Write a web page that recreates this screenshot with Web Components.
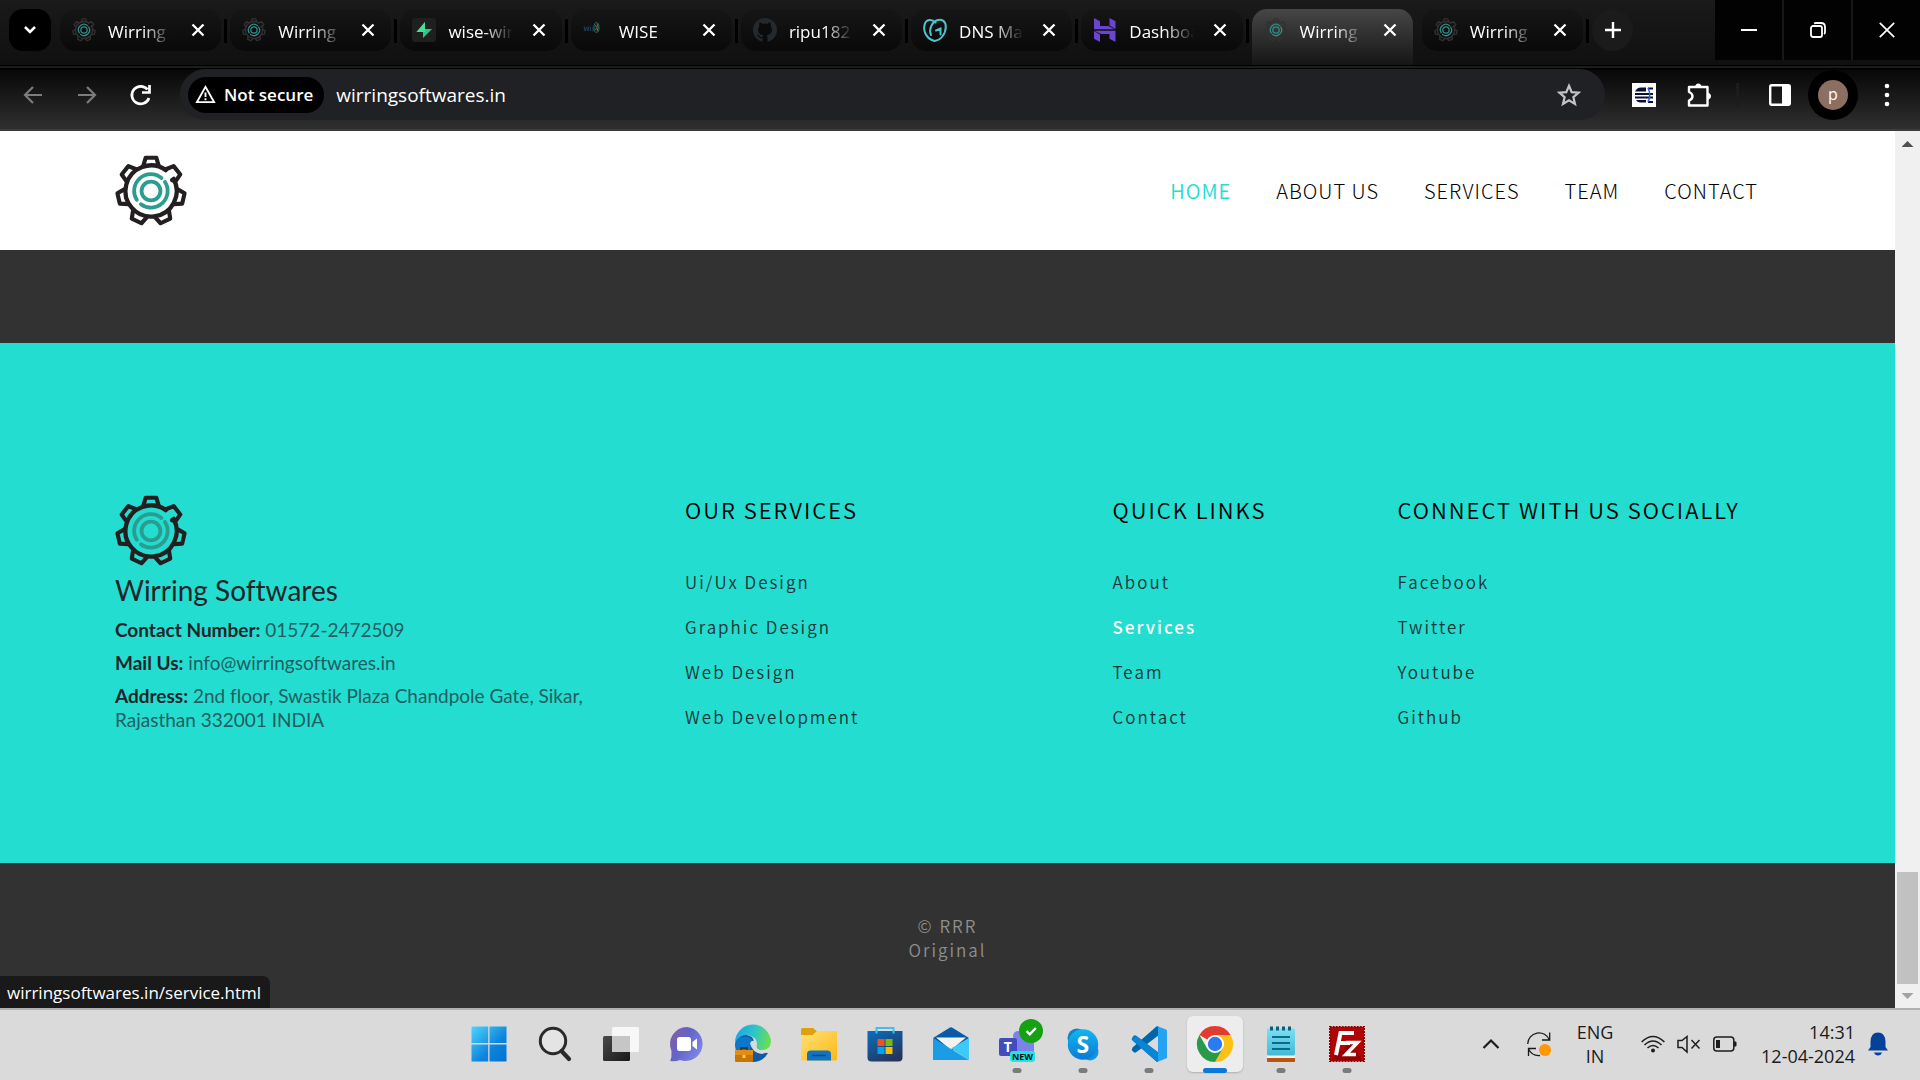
<!DOCTYPE html>
<html lang="en">
<head>
<meta charset="utf-8">
<title>Wirring Softwares</title>
<style>
html,body{height:100%}
body{margin:0;display:flex;flex-direction:column;overflow:hidden;background:#323232;
--ui:"Open Sans","Noto Sans",sans-serif;--site:"Noto Sans CJK SC","Noto Sans",sans-serif;--brand:Lato,"Open Sans",sans-serif;font-family:var(--ui)}
main{flex:1;min-height:0;display:flex;position:relative}
site-page{flex:1;min-width:0}
status-bubble{position:absolute;left:0;bottom:0}
</style>
</head>
<body>
<tab-strip>
<browser-tab icon="gear">Wirring S</browser-tab>
<browser-tab icon="gear">Wirring S</browser-tab>
<browser-tab icon="bolt">wise-wirr</browser-tab>
<browser-tab icon="wise">WISE</browser-tab>
<browser-tab icon="github">ripu1821</browser-tab>
<browser-tab icon="godaddy">DNS Man</browser-tab>
<browser-tab icon="hostinger">Dashboa</browser-tab>
<browser-tab icon="gear" active>Wirring</browser-tab>
<browser-tab icon="gear">Wirring</browser-tab>
</tab-strip>
<browser-toolbar></browser-toolbar>
<main>
<site-page></site-page>
<scroll-bar></scroll-bar>
<status-bubble>wirringsoftwares.in/service.html</status-bubble>
</main>
<task-bar></task-bar>
<script>
const gear = (dark, teal) => `<svg viewBox="-35 -35 70 70" fill="none" stroke-linecap="round" stroke-linejoin="round">
<g stroke="${dark}" stroke-width="4">${[0,1,3,4,5,6,2].map(i => i === 1
  ? `<path transform="rotate(51.4)" d="M-7.500-24.500L-5.200-32.300H5.200L7.400-25L4.500-22.500"/>`
  : `<path transform="rotate(${i*51.43})" d="M-7.500-24.500L-5.200-32.300H5.200L7.500-24.500"/>`).join('')}
<path d="M22-11.800A24.900 24.900 0 1 1 14.500-20.300" stroke-width="4.200"/></g>
<g stroke="${teal}" stroke-width="3.700"><circle r="9.200"/><path d="M-13.800 8.600A16.200 16.200 0 0 1 10.200-12.600M13.600-8.800A16.200 16.200 0 0 1-9.800 12.900"/></g></svg>`;
const line = (d, w = 2, c = 'currentColor', vb = '0 0 24 24') => `<svg viewBox="${vb}" fill="none" stroke="${c}" stroke-width="${w}"><path d="${d}"/></svg>`;
const ICONS = {
gear: gear('#343031', '#2f8f89'),
logo: gear('#231f20', '#2a9d90'),
bolt: `<svg viewBox="0 0 24 24"><rect width="24" height="24" rx="3" fill="#1f1f1f"/><path d="M13 4v7h7L11 20v-6H4.500Z" fill="#2fc584"/><path d="M13 4L4.500 14H13Z" fill="#46dd9c"/></svg>`,
wise: `<svg viewBox="0 0 24 24" fill="none" stroke-width="1"><path d="M1 8l1 5 1.500-4 1.500 4 1-5M7.500 9v4M11 9q-3 1-1 2t-1 2" stroke="#1d4152"/><ellipse cx="13.500" cy="9.500" rx="2.500" ry="5" stroke="#286a68"/><path d="M12.500 7q2 3 0 5M14 5.500q2 4 0 8" stroke="#8a6a34"/></svg>`,
github: `<svg viewBox="0 0 24 24"><circle cx="12" cy="12" r="12" fill="#24292e"/><path d="M9.500 24v-4q-3 .8-4.200-1.500-.7-1.400-1.600-1.800 1.500-.5 2.700 1.200 1.100 1.500 3.200.8.2-1 .8-1.500C6.500 16.600 5 14.500 5 11.500q0-2.100 1.300-3.600-.5-1.500.2-3.300 1.600 0 3.200 1.300 2.300-.6 4.600 0 1.600-1.300 3.200-1.300.7 1.800.2 3.300Q19 9.400 19 11.500c0 3-1.500 5.100-5.400 5.700q.9.800.9 2.500V24z" fill="#0b0b0b"/></svg>`,
godaddy: `<svg viewBox="0 0 24 24" fill="none" stroke="#4cc3cb" stroke-width="2" stroke-linecap="round"><path d="M11.500 23C4 21 0 14 1.500 7 3 .5 9 1 12.500 4.500M8 17C5.500 11 9 4 14 2.200 19 .5 23 3.500 22.800 9 22.600 16 18 22 11.500 23M13 12.500L17.500 10.500V16.500"/></svg>`,
hostinger: `<svg viewBox="0 0 24 24" fill="#6a45d2"><path d="M1 0l6 3.300V8h8.500l6 3.300H1zM16.500 0L22.500 3.300V11L16.500 7.500zM22.500 24l-6-3.300V16H8L1.500 12.700h21zM1 13l6 3.500V24L1 20.700z"/></svg>`,
close: line('M1.500 1.500L12.500 12.500M12.500 1.500L1.500 12.500', 2.3, 'currentColor', '0 0 14 14'),
chev: line('M2 3l5 5 5-5', 2.6, 'currentColor', '0 0 14 12'),
plus: line('M8 0V16M0 8H16', 2.4, 'currentColor', '0 0 16 16'),
min: line('M0 8H16', 2, 'currentColor', '0 0 16 16'),
restore: `<svg viewBox="0 0 16 16" fill="none" stroke="currentColor" stroke-width="1.800"><rect x="1" y="4" width="11" height="11" rx="2"/><path d="M4 1.500Q5 1 6 1H11Q15 1 15 5V10Q15 11.500 14 12"/></svg>`,
wclose: line('M.8.8L15.200 15.200M15.200.8L.8 15.200', 1.7, 'currentColor', '0 0 16 16'),
back: line('M21 12H4M12 4L4 12L12 20', 2.2),
fwd: line('M3 12H20M12 4L20 12L12 20', 2.2),
reload: `<svg viewBox="0 0 24 24" fill="none" stroke="currentColor" stroke-width="2.700"><path d="M20 15A8.800 8.800 0 1 1 18.500 6.500M20.500 2V9.500H13"/></svg>`,
warn: `<svg viewBox="0 0 22 20" fill="none" stroke="#fff" stroke-width="2"><path d="M11 2L20 18H2ZM11 8V12.500M11 14V16"/></svg>`,
star: `<svg viewBox="0 0 24 24" fill="none" stroke="#c4c4c6" stroke-width="2.200"><path d="M12 2.800l2.700 6.300 6.900.6-5.200 4.500 1.600 6.700-6-3.600-6 3.600 1.600-6.700-5.200-4.500 6.900-.6z"/></svg>`,
ext: `<svg viewBox="0 0 24 24"><rect width="24" height="24" fill="#fff"/><path d="M3 8.500Q5 4.500 9 4.500H14V8.500zM16 4.500H21V6.500H16zM3 10H21V12H3zM3 13.500H21V15.500H3zM4 17H14V19.500H8Q5 19 4 17zM16 18H21V20H16z" fill="#0a1030"/><path d="M16 5Q19.500 12 16 19" stroke="#2b63f0" stroke-width="1.500" fill="none"/></svg>`,
puzzle: `<svg viewBox="0 0 24 24"><path d="M2 4H20.500V22.500H2V17.500Q5.500 16 5.500 13.200T2 9Z" fill="none" stroke="#fff" stroke-width="2.400" stroke-linejoin="round"/><path d="M8 4Q8.500 .5 11.300 .5T14.600 4zM20.500 9.500q3.500 1 3.500 3.700t-3.500 3.700z" fill="#fff"/></svg>`,
panel: `<svg viewBox="0 0 22 22"><rect x="1.200" y="1.200" width="19.600" height="19.600" rx="1.500" fill="none" stroke="#fff" stroke-width="2.400"/><path d="M13 1h8v20h-8z" fill="#fff"/></svg>`,
dots: `<svg viewBox="0 0 6 24" fill="#fff"><circle cx="3" cy="3" r="2.300"/><circle cx="3" cy="12" r="2.300"/><circle cx="3" cy="21" r="2.300"/></svg>`,
windows: `<svg viewBox="0 0 36 36"><defs><linearGradient id="w" gradientUnits="userSpaceOnUse" x1="0" y1="0" x2="36" y2="36"><stop stop-color="#50d6ff"/><stop offset=".6" stop-color="#0e84dc"/><stop offset="1" stop-color="#0073cf"/></linearGradient></defs><path fill="url(#w)" d="M1.500.5H17.200V17H.5V1.500ZM18.500.5H35.500V17H18.500ZM.5 18.500H17.200V35.500H.5ZM18.500 18.500H35.500V35.500H18.500Z"/></svg>`,
search: `<svg viewBox="0 0 36 36" fill="none" stroke="#2a2a2a"><circle cx="16" cy="15" r="12.700" stroke-width="3" fill="#e4e4e4"/><path d="M24.500 25L32 33" stroke-width="4.200" stroke-linecap="round"/></svg>`,
taskview: `<svg viewBox="0 0 36 36"><defs><linearGradient id="t" x1="0" y1="0" x2="1" y2="1"><stop stop-color="#4a4a4a"/><stop offset="1" stop-color="#181818"/></linearGradient></defs><rect y="10" width="27" height="25" rx="1.500" fill="url(#t)"/><rect x="9" y="1" width="27" height="25" rx="1.500" fill="#f7f7f7"/><path d="M9 10H27V26H9z" fill="#c6c6c6"/></svg>`,
chat: `<svg viewBox="0 0 36 36"><defs><linearGradient id="c" x1="0" y1="0" x2="1" y2=".6"><stop stop-color="#8c5c9e"/><stop offset=".5" stop-color="#6264c8"/><stop offset="1" stop-color="#7c86e4"/></linearGradient></defs><path fill="url(#c)" d="M18 1A17 17 0 1 1 11 34Q7 36 1.200 35Q3 31 2.500 25A17 17 0 0 1 18 1Z"/><rect x="8" y="11" width="14" height="14" rx="2.500" fill="#fff"/><path d="M23.500 16L28 12.500V23.500L23.500 20Z" fill="#fff"/></svg>`,
edge: `<svg viewBox="0 0 36 36"><defs><linearGradient id="e" x1="0" y1=".3" x2="1" y2=".5"><stop stop-color="#1da4e4"/><stop offset=".5" stop-color="#2cc4cc"/><stop offset="1" stop-color="#6ae04e"/></linearGradient></defs><path d="M0 18Q2 7 12 9Q21 11 18 19Q17 26 33 27Q28 36 18 36Q2 35 0 18Z" fill="#1059a6"/><path d="M0 18Q4 9 13 11Q20 13 17 18L14 26H1Z" fill="#0c78cc"/><path d="M0 17A18 18 0 0 1 36 16Q35 25 25 24Q20 23 21.500 20Q23 14 18 11Q7 5 0 17Z" fill="url(#e)"/><path d="M15 17Q18 12 22 18Q19 25 33 26L27 28Q17 27 15 17Z" fill="#dadada"/><rect y="24" width="18" height="12" rx="1" fill="#c97408"/><path d="M0 24H18V29H0z" fill="#e38d13"/><path d="M6 24v-2h6v2" stroke="#3a2c1c" stroke-width="1.500" fill="none"/><rect x="7.500" y="29" width="3" height="3" fill="#ffcf33"/></svg>`,
folder: `<svg viewBox="0 0 36 36"><defs><linearGradient id="f" x1="0" y1="0" x2="1" y2="1"><stop stop-color="#ffe27a"/><stop offset="1" stop-color="#fcb813"/></linearGradient></defs><path d="M0 3.500Q0 2 1.500 2H12L16 5.500V12H0z" fill="#dfa00c"/><path d="M0 9H11.500L16 5H35Q36 5 36 6V33Q36 34.500 34.500 34.500H1.500Q0 34.500 0 33z" fill="url(#f)"/><path d="M6 34.500V28Q6 24.500 9.500 24.500H26.500Q30 24.500 30 28V34.500z" fill="#1173c4"/><path d="M11 29.500H25" stroke="#0a4b8c" stroke-width="1.500"/></svg>`,
store: `<svg viewBox="0 0 36 36"><defs><linearGradient id="s" x1="0" y1="0" x2=".6" y2="1"><stop stop-color="#0a6fc0"/><stop offset="1" stop-color="#24365e"/></linearGradient></defs><path d="M.5 5H35.500V31.500Q35.500 35.500 31.500 35.500H4.500Q.5 35.500 .5 31.500z" fill="url(#s)"/><path d="M9.500 7.500V2H26.500V7.500" fill="none" stroke="#36c3f2" stroke-width="2"/><path d="M10.500 13H17.500V20H10.500z" fill="#f25022"/><path d="M18.500 13H25.500V20H18.500z" fill="#7fba00"/><path d="M10.500 21H17.500V28H10.500z" fill="#00a4ef"/><path d="M18.500 21H25.500V28H18.500z" fill="#ffb900"/></svg>`,
mail: `<svg viewBox="0 0 36 36"><path d="M0 12L17 1.500Q18 .8 19 1.500L36 12 18 26Z" fill="#0b5aa8"/><path d="M3 11.500H33L18 24Z" fill="#f3f3f3"/><path d="M0 12L36 34H0z" fill="#1b9ce4"/><path d="M36 12L18 22.500 36 34z" fill="#3ccaf6"/></svg>`,
skype: `<svg viewBox="0 0 36 36"><defs><linearGradient id="k" x1="0" y1="0" x2="0" y2="1"><stop stop-color="#12b6f0"/><stop offset="1" stop-color="#0a7ad6"/></linearGradient></defs><circle cx="12" cy="12" r="9.500" fill="#0d86c4"/><circle cx="25" cy="26" r="8.500" fill="#1295e0"/><circle cx="18" cy="18.500" r="15.200" fill="url(#k)"/></svg>`,
vscode: `<svg viewBox="0 0 36 36"><path d="M2 10.500Q3.500 8.500 5.500 10L28 27V35L26 36 1.500 14.500Q0 12.500 2 10.500Z" fill="#0179cb"/><path d="M2 25.500Q3.500 27.500 5.500 26L28 9V1L26 0 1.500 21.500Q0 23.500 2 25.500Z" fill="#0065a9"/><path d="M1.500 14.500L5.500 10 28 27 26 36z" fill="#0a84d4"/><path d="M26 0L35 3.500Q36 4 36 5V31Q36 32 35 32.500L26 36Q27 35.500 27 34V2Q27 .500 26 0Z" fill="#24a3f2"/></svg>`,
chrome: `<svg viewBox="0 0 36 36"><path d="M18 18L2.400 9A18 18 0 0 1 33.600 9Z" fill="#e33b2e"/><path d="M18 9H33.600A18 18 0 0 1 18 36L25.800 22.500Z" fill="#fdc116"/><path d="M2.400 9A18 18 0 0 0 18 36L25.800 22.500 10.200 22.500Z" fill="#2a9a4a"/><circle cx="18" cy="18" r="9" fill="#fff"/><circle cx="18" cy="18" r="7.200" fill="#2b7af0"/></svg>`,
notepad: `<svg viewBox="0 0 36 36"><defs><linearGradient id="n" x1="0" y1="0" x2="0" y2="1"><stop stop-color="#7be0f4"/><stop offset="1" stop-color="#44b8d6"/></linearGradient></defs><rect x="4" y="30" width="28" height="6" rx="1" fill="#b8560f"/><path d="M4 27H32V32H4z" fill="#f2f2f2"/><rect x="4" y="2.500" width="28" height="27" rx="1.500" fill="url(#n)"/><path d="M9 11H27M9 17H27M9 23H27" stroke="#0b6a86" stroke-width="2"/><path d="M8.500.5V4.500M14.500.5V4.500M20.500.5V4.500M26.500.5V4.500" stroke="#0b5f78" stroke-width="3"/></svg>`,
filezilla: `<svg viewBox="0 0 36 36"><rect x="1" y="1" width="34" height="34" fill="#b00505"/><path d="M20 18L34 34H2z" fill="#930202"/><rect x=".7" y=".7" width="34.600" height="34.600" fill="none" stroke="#8d0000" stroke-width="1.400" stroke-dasharray="2 1"/><path d="M7 29L11.500 7H25M9.500 17H21" fill="none" stroke="#fff" stroke-width="4"/><path d="M17 16.500H28.500L17 28.500H27" fill="none" stroke="#fff" stroke-width="3.600"/></svg>`,
teams: `<svg viewBox="0 0 44 44"><circle cx="19" cy="14" r="5" fill="#7b83eb"/><rect x="15" y="16" width="20" height="17" rx="3" fill="#7b83eb"/><rect y="16" width="18" height="18" rx="2" fill="#444bbd"/></svg>`,
check: `<svg viewBox="0 0 24 24"><circle cx="12" cy="12" r="12" fill="#16a014"/><path d="M7.500 12L10.800 15.300 16.800 9" stroke="#fff" stroke-width="2.400" fill="none"/></svg>`,
up: line('M4.500 16L12 8.500 19.500 16', 2.2, '#1d1d1d'),
sync: `<svg viewBox="0 0 24 24" fill="none" stroke="#1a1a1a" stroke-width="1.300"><path d="M.7 12A11.300 11.300 0 0 1 22.500 8M22.700 .5V8H15M13 23.500A11.500 11.500 0 0 1 1.500 17M1.500 24V16.500H9"/><circle cx="18" cy="18" r="6" fill="#ff9800" stroke="none"/></svg>`,
wifi: `<svg viewBox="0 0 24 24" fill="none" stroke="#1d1d1d" stroke-width="1.600"><path d="M.6 10Q12-1 23.400 10M3.500 13Q12 5 20.500 13M6.500 16Q12 11 17.500 16"/><circle cx="12" cy="18.500" r="2" fill="#1d1d1d" stroke="none"/></svg>`,
volume: `<svg viewBox="0 0 24 24" fill="none" stroke="#1d1d1d" stroke-width="1.500"><path d="M1 8.500H5L10 4.500V20L5 15.500H1ZM14.500 8L22.500 16.500M22.500 8L14.500 16.500"/></svg>`,
battery: `<svg viewBox="0 0 24 24"><rect x=".8" y="5" width="20" height="14" rx="3" fill="none" stroke="#1d1d1d" stroke-width="1.500"/><rect x="3" y="8" width="4" height="8" fill="#1d1d1d"/><path d="M21 9.500h1.500q1 0 1 1v3q0 1-1 1H21z" fill="#1d1d1d"/></svg>`,
bell: `<svg viewBox="0 0 24 24" fill="#04429a"><path d="M4.500 9.500Q5 .5 12 .5t7.500 9V15L22 18.500H2L4.500 15zM8 20.500H16Q15 23.500 12 23.500T8 20.500Z"/></svg>`
};
const define = (name, css, html) => customElements.define(name, class extends HTMLElement {
  connectedCallback() {
    if (this.shadowRoot) return;
    this.attachShadow({mode: 'open'}).innerHTML = `<style>:host,*{box-sizing:border-box}button{appearance:none;border:0;padding:0;background:none;font:inherit;color:inherit;display:flex;align-items:center;justify-content:center}a{color:inherit;text-decoration:none}${css}</style>` + (typeof html === 'function' ? html(this) : html);
  }
});

define('ui-icon', ':host{display:block;width:24px;height:24px;flex:none}svg{display:block;width:100%;height:100%;overflow:visible}', el => ICONS[el.getAttribute('name')]);

define('browser-tab', `
:host{display:flex;align-items:center;min-width:0;height:42px;margin-top:9px;padding:0 16px 0 12px;border-radius:15px;background:linear-gradient(#161616,#090909);color:#fff;font-size:17px;position:relative}
:host::after{content:"";position:absolute;right:-6px;top:10px;width:3px;height:24px;background:#000}
:host([active]){height:56px;padding-bottom:14px;border-radius:15px 15px 0 0;background:linear-gradient(#464646,#161616)}
:host([active])::after{display:none}
.t{flex:1;min-width:0;margin:3px 16px 0 12px;overflow:hidden;white-space:nowrap;line-height:24px;-webkit-mask:linear-gradient(90deg,#000 52%,transparent 96%);mask:linear-gradient(90deg,#000 52%,transparent 96%)}
button{flex:none}
.x{width:14px;height:14px}`,
el => `<ui-icon name="${el.getAttribute('icon')}"></ui-icon><span class="t"><slot></slot></span><button aria-label="Close tab"><ui-icon class="x" name="close"></ui-icon></button>`);

define('tab-strip', `
:host{display:flex;height:65px;background:linear-gradient(#1a1a1a,#101010);color:#fff;padding-left:9px}
.menu{width:42px;height:42px;margin:9px 9px 0 0;border-radius:14px;background:#000}
.menu ui-icon{width:14px;height:12px}
.tabs{flex:1;display:grid;grid-auto-flow:column;grid-auto-columns:minmax(0,1fr);gap:9px}
.new{width:41px;height:42px;margin:9px 82px 0 9px;border-radius:50%;background:#1b1b1b}
.new ui-icon,.win ui-icon{width:16px;height:16px}
.win{display:flex;gap:2px;height:60px;background:#181818}
.win button{width:67px;background:#020202}`,
`<button class="menu" aria-label="Search tabs"><ui-icon name="chev"></ui-icon></button><div class="tabs"><slot></slot></div><button class="new" aria-label="New tab"><ui-icon name="plus"></ui-icon></button>
<div class="win"><button aria-label="Minimize"><ui-icon name="min"></ui-icon></button><button aria-label="Restore"><ui-icon name="restore"></ui-icon></button><button aria-label="Close"><ui-icon name="wclose"></ui-icon></button></div>`);

define('browser-toolbar', `
:host{display:flex;align-items:center;height:66px;padding:3px 30px 9px 21px;color:#fff;border-top:1px solid #000;border-bottom:2px solid #3b3b3b;background:linear-gradient(#1c1c1c 2px,#000 2px,#000 3px,#080808 4px,#2f2f2f)}
.nav{display:flex;gap:30px;margin-right:27px}
.dim{color:#7c7c7c}
.omni{flex:1;display:flex;align-items:center;height:51px;margin-right:27px;padding:0 24px 0 8px;border-radius:26px;background:#202125}
.chip{height:36px;padding:0 11px 0 7px;gap:8px;border-radius:18px;background:#000;font-weight:600;font-size:17px}
.chip ui-icon{width:21px;height:19px}
input{flex:1;min-width:0;border:0;background:none;color:#fff;font:19px/28px var(--ui);padding:0;margin-left:12px;outline:0}
.right{display:flex;align-items:center}
.right button:nth-of-type(2){margin-left:31px}
i{width:3px;height:24px;margin:0 30px 0 25px;background:#1c1c1c}
.panel{width:22px;height:22px}
.me{width:50px;height:50px;margin:0 26px 0 17px;border-radius:50%;background:#000}
.me span{width:30px;height:30px;border-radius:50%;background:#8d6e63;font-size:16px;line-height:28px}
.dots{width:6px}`,
`<div class="nav"><button class="dim" aria-label="Back"><ui-icon name="back"></ui-icon></button><button class="dim" aria-label="Forward"><ui-icon name="fwd"></ui-icon></button><button aria-label="Reload"><ui-icon name="reload"></ui-icon></button></div>
<div class="omni"><button class="chip"><ui-icon name="warn"></ui-icon>Not secure</button><input aria-label="Address" value="wirringsoftwares.in"><button aria-label="Bookmark"><ui-icon name="star"></ui-icon></button></div>
<div class="right"><button aria-label="Extension"><ui-icon name="ext"></ui-icon></button><button aria-label="Extensions"><ui-icon name="puzzle"></ui-icon></button><i></i><button aria-label="Side panel"><ui-icon class="panel" name="panel"></ui-icon></button><button class="me"><span>p</span></button><button aria-label="Menu"><ui-icon class="dots" name="dots"></ui-icon></button></div>`);

define('site-header', `
:host{display:flex;align-items:center;justify-content:space-between;padding:24px 137px 23px 115px;background:#fff;color:#000;font:300 20px/24px var(--site);letter-spacing:1px}
a{display:block}
.logo{width:72px;height:72px}
nav{display:flex;gap:45px}
.on{color:#23ddd1;font-weight:350}`,
`<a href="#" aria-label="Home"><ui-icon class="logo" name="logo"></ui-icon></a><nav><a class="on" href="#">HOME</a><a href="#">ABOUT US</a><a href="#">SERVICES</a><a href="#">TEAM</a><a href="#">CONTACT</a></nav>`);

define('footer-links', `
:host{display:block;font:350 17px/21px var(--site);letter-spacing:2px;color:#1f3436}
h2{margin:0 0 48px;font-size:22px;line-height:28px;font-weight:350;color:#000;white-space:nowrap}
ul{list-style:none;margin:0;padding:0;display:grid;gap:24px}
.on{color:#fff;font-weight:500}`,
el => `<h2>${el.getAttribute('heading')}</h2><ul>${el.getAttribute('links').split(',').map(l => `<li><a href="#"${l === el.getAttribute('current') ? ' class="on"' : ''}>${l}</a></li>`).join('')}</ul>`);

define('contact-card', `
:host{display:block;padding-right:90px;font:19px/24px var(--brand);font-variant-ligatures:none;color:#215e60}
.logo{width:72px;height:72px}
h1{margin:6px 0 11px;font-size:28px;line-height:34px;font-weight:400;color:#212529}
p{margin:0 0 9px}
b{font-weight:700;color:#212529}`,
`<ui-icon class="logo" name="logo"></ui-icon><h1>Wirring Softwares</h1><p><b>Contact Number:</b> 01572-2472509</p><p><b>Mail Us:</b> info@wirringsoftwares.in</p><p><b>Address:</b> 2nd floor, Swastik Plaza Chandpole Gate, Sikar,<br>Rajasthan 332001 INDIA</p>`);

define('site-page', `
:host{display:flex;flex-direction:column;background:#323232}
footer{margin-top:93px;padding:152px 70px 122px 115px;background:#23ddd1;display:grid;grid-template-columns:4fr 3fr 2fr 3fr}
.copy{margin:51px 0;text-align:center;font:350 17px/24px var(--site);letter-spacing:2px;color:#8e8e8e}
.copy span{display:block}`,
`<site-header></site-header><footer><contact-card></contact-card>
<footer-links heading="OUR SERVICES" links="Ui/Ux Design,Graphic Design,Web Design,Web Development"></footer-links>
<footer-links heading="QUICK LINKS" links="About,Services,Team,Contact" current="Services"></footer-links>
<footer-links heading="CONNECT WITH US SOCIALLY" links="Facebook,Twitter,Youtube,Github"></footer-links></footer>
<div class="copy"><span>© RRR</span><span>Original</span></div>`);

define('scroll-bar', `
:host{display:flex;flex-direction:column;align-items:center;width:25px;background:#f0f0f0}
b{width:12px;height:6px;margin:10px 0;background:#505050;clip-path:polygon(50% 0,100% 100%,0 100%)}
.track{flex:1;width:21px;display:flex;align-items:flex-end}
.thumb{width:100%;height:13.5%;background:#c1c1c1}
.dn{background:#a3a3a3;clip-path:polygon(0 0,100% 0,50% 100%);margin:9px 0}`,
`<b></b><div class="track"><div class="thumb"></div></div><b class="dn"></b>`);

define('status-bubble', ':host{display:block;padding:4px 9px 2px 7px;background:#191919;border-radius:0 7px 0 0;color:#fff;font:17px/26px var(--ui)}', '<slot></slot>');

define('task-item', `
:host{display:block}
button{position:relative;width:56px;height:56px;border-radius:6px}
:host([state=active]) button{background:#ededed;box-shadow:0 1px 2px #0003}
:host([state]) button::after{content:"";position:absolute;bottom:-1px;left:50%;transform:translateX(-50%);width:9px;height:5px;border-radius:3px;background:#7b7b7b}
:host([state=active]) button::after{width:24px;background:#0a78d6}
ui-icon{width:36px;height:36px}
.big{width:44px;height:44px;margin-left:8px}
.ck{position:absolute;width:24px;height:24px;left:30px;top:3px}
.t{position:absolute;left:10px;top:20px;width:18px;text-align:center;color:#fff;font:700 14px/22px var(--ui)}
.new{position:absolute;left:21px;top:35px;height:11px;border-radius:3px;background:#22e2e2;color:#001414;font:700 9px/11px var(--ui);padding:0 2px}
.s{position:absolute;inset:0;text-align:center;color:#fff;font:700 23px/56px var(--ui)}`,
el => { const n = el.getAttribute('name');
  return `<button aria-label="${n}"><ui-icon name="${n}"${n === 'teams' ? ' class="big"' : ''}></ui-icon>${n === 'teams' ? '<span class="t">T</span><span class="new">NEW</span><ui-icon class="ck" name="check"></ui-icon>' : n === 'skype' ? '<span class="s">S</span>' : ''}</button>`; });

define('task-bar', `
:host{display:flex;align-items:center;height:72px;padding-bottom:2px;background:#dadada;border-top:2px solid #b1b1b1;color:#1b1b1b;font:18px/24px var(--ui)}
.pad{flex:460 0 0}
.apps{display:flex;gap:10px}
.tray{flex:544 0 0;display:flex;align-items:center;justify-content:flex-end}
.up{margin-right:24px}
.lang{width:62px;margin:0 15px 0 13px;text-align:center}
.sys{gap:12px}
.time{margin-left:24px;text-align:right;display:block}
.bell{margin:0 30px 0 11px}
span{display:block}`,
`<div class="pad"></div><div class="apps">${['windows','search','taskview','chat','edge','folder','store','mail','teams*','skype*','vscode*','chrome+','notepad*','filezilla*'].map(n => `<task-item name="${n.replace(/[*+]/,'')}"${n.endsWith('*') ? ' state="open"' : n.endsWith('+') ? ' state="active"' : ''}></task-item>`).join('')}</div>
<div class="tray"><button class="up" aria-label="Show hidden icons"><ui-icon name="up"></ui-icon></button><button aria-label="Update"><ui-icon name="sync"></ui-icon></button><button class="lang"><div><span>ENG</span><span>IN</span></div></button><button class="sys" aria-label="System"><ui-icon name="wifi"></ui-icon><ui-icon name="volume"></ui-icon><ui-icon name="battery"></ui-icon></button><button class="time"><span>14:31</span><span>12-04-2024</span></button><button class="bell" aria-label="Notifications"><ui-icon name="bell"></ui-icon></button></div>`);
</script>
</body>
</html>
